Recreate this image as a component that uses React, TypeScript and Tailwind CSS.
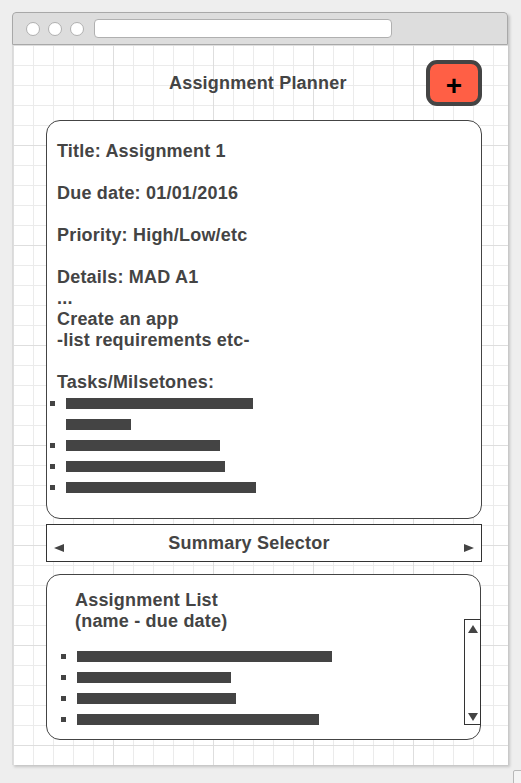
import React from 'react'

const font = { fontFamily: '"Liberation Sans", Arial, sans-serif' }

function Bar({ w }: { w: string }) {
  return <div className={`h-[11px] bg-[#444444] ${w}`} />
}

function Bullet() {
  return <div className="w-[5px] h-[5px] bg-[#444444]" />
}

function Triangle({ dir }: { dir: 'left' | 'right' | 'up' | 'down' }) {
  const points = {
    left: '0,4 10,0 10,8',
    right: '0,0 10,4 0,8',
    up: '5,0 10,8 0,8',
    down: '0,0 10,0 5,8',
  }[dir]
  return (
    <svg width="10" height="8" viewBox="0 0 10 8" className="block shrink-0">
      <polygon points={points} fill="#444444" />
    </svg>
  )
}

export default function App() {
  return (
    <div
      className="relative w-[521px] h-[783px] bg-[#eeeeee] pt-[12px] pl-[12px] text-[#444444] overflow-hidden tracking-[0.2px]"
      style={font}
    >
      {/* window */}
      <div className="w-[496px] h-[753px] flex flex-col rounded-t-[4px] bg-white shadow-[2px_2px_3px_rgba(0,0,0,0.18)]">
        {/* title bar */}
        <div className="h-[33px] shrink-0 flex items-center pl-[13px] bg-[#dddddd] border border-[#a8a8a8] rounded-t-[4px]">
          <div className="flex gap-[8px]">
            <div className="w-[14px] h-[14px] rounded-full bg-white border border-[#b0b0b0]" />
            <div className="w-[14px] h-[14px] rounded-full bg-white border border-[#b0b0b0]" />
            <div className="w-[14px] h-[14px] rounded-full bg-white border border-[#b0b0b0]" />
          </div>
          <div className="ml-[10px] w-[298px] h-[19px] rounded-[4px] bg-white border border-[#b0b0b0]" />
        </div>

        {/* canvas */}
        <div className="flex-1 flex flex-col pl-[33px] pr-[26px] bg-white bg-[image:linear-gradient(to_right,#dedede_1px,transparent_1px),linear-gradient(to_bottom,#dedede_1px,transparent_1px),linear-gradient(to_right,#ebebeb_1px,transparent_1px),linear-gradient(to_bottom,#ebebeb_1px,transparent_1px)] bg-[size:100px_100px,100px_100px,20px_20px,20px_20px] border-l border-[#dadada]">
          {/* header */}
          <div className="flex items-center mt-[15px]">
            <div className="pl-[123px] text-[18px] font-bold leading-[21px]">Assignment Planner</div>
            <button className="ml-auto w-[56px] h-[46px] rounded-[11px] border-[4px] border-[#444444] bg-[#ff5f45] flex items-center justify-center pt-[6px] text-black text-[28px] font-bold leading-none">
              +
            </button>
          </div>

          {/* detail card */}
          <div className="mt-[14px] h-[399px] bg-white border border-[#444444] rounded-[14px] pt-[20px] text-[18px] font-bold leading-[21px]">
            <div className="pl-[10px]">
              <p className="mb-[21px]">Title: Assignment 1</p>
              <p className="mb-[21px]">Due date: 01/01/2016</p>
              <p className="mb-[21px]">Priority: High/Low/etc</p>
              <p>Details: MAD A1</p>
              <p>...</p>
              <p>Create an app</p>
              <p className="mb-[21px]">-list requirements etc-</p>
              <p>Tasks/Milsetones:</p>
            </div>
            <div className="flex flex-col">
              <div className="flex">
                <div className="w-[19px] h-[21px] pl-[3px] flex items-center"><Bullet /></div>
                <div className="flex flex-col">
                  <div className="h-[21px] flex items-center"><Bar w="w-[187px]" /></div>
                  <div className="h-[21px] flex items-center"><Bar w="w-[65px]" /></div>
                </div>
              </div>
              <div className="flex">
                <div className="w-[19px] h-[21px] pl-[3px] flex items-center"><Bullet /></div>
                <div className="h-[21px] flex items-center"><Bar w="w-[154px]" /></div>
              </div>
              <div className="flex">
                <div className="w-[19px] h-[21px] pl-[3px] flex items-center"><Bullet /></div>
                <div className="h-[21px] flex items-center"><Bar w="w-[159px]" /></div>
              </div>
              <div className="flex">
                <div className="w-[19px] h-[21px] pl-[3px] flex items-center"><Bullet /></div>
                <div className="h-[21px] flex items-center"><Bar w="w-[190px]" /></div>
              </div>
            </div>
          </div>

          {/* summary selector */}
          <div className="mt-[5px] h-[38px] bg-white border border-[#333333] flex items-center px-[7px]">
            <div className="mt-[10px]"><Triangle dir="left" /></div>
            <div className="flex-1 text-center pr-[30px] text-[18px] font-bold leading-[21px]">Summary Selector</div>
            <div className="mt-[10px]"><Triangle dir="right" /></div>
          </div>

          {/* assignment list */}
          <div className="mt-[12px] mr-[1px] h-[166px] bg-white border border-[#444444] rounded-[14px] flex">
            <div className="flex-1 pt-[15px]">
              <div className="pl-[28px] text-[18px] font-bold leading-[21px]">
                <p>Assignment List</p>
                <p>(name - due date)</p>
              </div>
              <div className="mt-[14px] flex flex-col pl-[14px]">
                {['w-[255px]', 'w-[154px]', 'w-[159px]', 'w-[242px]'].map((w, i) => (
                  <div key={i} className="h-[21px] flex items-center gap-[11px]">
                    <Bullet />
                    <Bar w={w} />
                  </div>
                ))}
              </div>
            </div>
            <div className="mt-[44px] -mr-px w-[17px] h-[106px] border border-[#333333] bg-white flex flex-col items-center justify-between pt-[5px] pb-[3px]">
              <Triangle dir="up" />
              <Triangle dir="down" />
            </div>
          </div>
        </div>
      </div>

      {/* resize grip */}
      <div className="absolute left-[513px] top-[770px] w-[12px] h-[16px] rounded-[2px] border border-[#b8b8b8] bg-[#f4f4f4]" />
    </div>
  )
}
